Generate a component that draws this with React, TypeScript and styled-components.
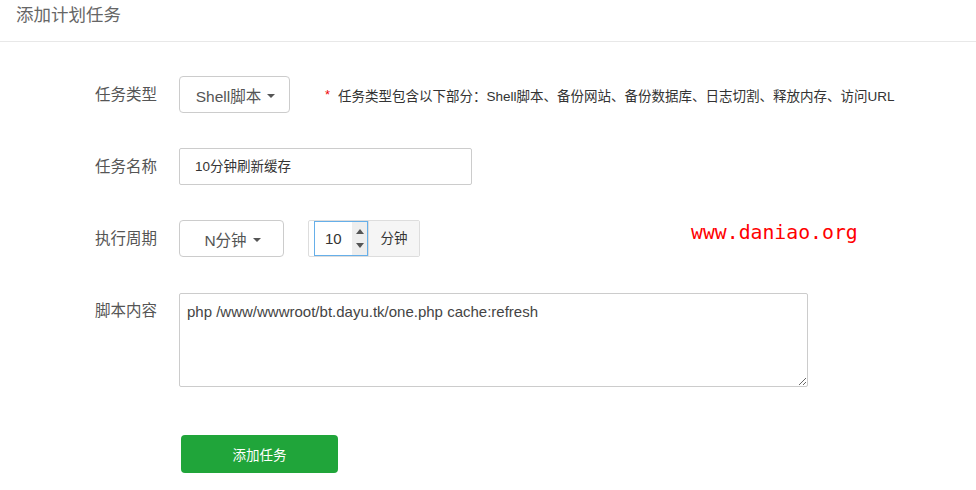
import styled, { createGlobalStyle } from "styled-components";

const GlobalStyle = createGlobalStyle`
  body {
    margin: 0;
    background: #fff;
    font-family: "Liberation Sans", "Noto Sans CJK SC", sans-serif;
    color: #555;
  }
  * { box-sizing: border-box; }
`;

const Page = styled.div`
  position: relative;
  width: 976px;
  height: 490px;
  overflow: hidden;
`;

const Header = styled.div`
  height: 42px;
  padding: 0 16px;
  border-bottom: 1px solid #e8e8e8;
  font-size: 17.5px;
  line-height: 31px;
  color: #666;
`;

const Form = styled.div`
  display: grid;
  grid-template-columns: 157px 1fr;
  column-gap: 22px;
  row-gap: 35px;
  padding-top: 34px;
`;

const Label = styled.div`
  text-align: right;
  font-size: 15.5px;
  line-height: 37px;
  color: #555;
`;

const Line = styled.div`
  display: flex;
  align-items: center;
`;

const Dropdown = styled.div<{ $w: number }>`
  width: ${(p) => p.$w}px;
  height: 37px;
  border: 1px solid #ccc;
  border-radius: 4px;
  display: flex;
  align-items: center;
  justify-content: center;
  gap: 6px;
  font-size: 15.5px;
  color: #555;
  padding-left: 2px;
`;

const Caret = styled.span`
  width: 0;
  height: 0;
  border-left: 4px solid transparent;
  border-right: 4px solid transparent;
  border-top: 4px solid #555;
  margin-top: 2px;
`;

const Note = styled.div`
  margin-left: 35px;
  font-size: 13.5px;
  color: #333;
  display: flex;
  align-items: center;
  gap: 8px;
`;

const Star = styled.span`
  color: #ef0808;
  font-size: 13px;
`;

const TextInput = styled.div`
  width: 293px;
  height: 37px;
  border: 1px solid #ccc;
  border-radius: 2px;
  padding-left: 15px;
  font-size: 13.5px;
  line-height: 35px;
  color: #333;
`;

const Group = styled.div`
  margin-left: 24px;
  height: 37px;
  display: flex;
  border: 1px solid #ddd;
  border-radius: 2px;
  padding-left: 5px;
`;

const NumBox = styled.div`
  width: 54px;
  height: 35px;
  border: 1px solid #66afe9;
  display: flex;
  align-items: stretch;
`;

const NumText = styled.div`
  flex: 1;
  padding-left: 10px;
  font-size: 15px;
  line-height: 33px;
  color: #333;
`;

const Spinner = styled.div`
  width: 15px;
  background: #eee;
  display: flex;
  flex-direction: column;
  justify-content: space-between;
  align-items: center;
  padding: 7px 0;
`;

const Arrow = styled.span<{ $up?: boolean }>`
  width: 0;
  height: 0;
  border-left: 4px solid transparent;
  border-right: 4px solid transparent;
  ${(p) =>
    p.$up ? "border-bottom: 5px solid #555;" : "border-top: 5px solid #555;"}
`;

const Addon = styled.div`
  width: 51px;
  background: #f5f5f5;
  border-left: 1px solid #ddd;
  font-size: 13.5px;
  line-height: 35px;
  text-align: center;
  color: #333;
`;

const Script = styled.textarea`
  width: 629px;
  height: 94px;
  margin-top: 1px;
  border: 1px solid #ccc;
  border-radius: 2px;
  padding: 8px 7px;
  font-family: "Liberation Sans", "Noto Sans CJK SC", sans-serif;
  font-size: 15px;
  line-height: 20px;
  color: #444;
  resize: both;
  outline: none;
`;

const Submit = styled.button`
  grid-column: 2;
  margin-top: 13px;
  margin-left: 2px;
  width: 157px;
  height: 38px;
  border: none;
  border-radius: 4px;
  background: #20a53a;
  color: #fff;
  font-family: "Liberation Sans", "Noto Sans CJK SC", sans-serif;
  font-size: 13.5px;
`;

const Watermark = styled.div`
  position: absolute;
  left: 691px;
  top: 221px;
  font-family: "DejaVu Sans Mono", "Liberation Mono", monospace;
  font-size: 19.8px;
  color: #ff0000;
`;

export default function App() {
  return (
    <Page>
      <GlobalStyle />
      <Header>添加计划任务</Header>
      <Form>
        <Label>任务类型</Label>
        <Line>
          <Dropdown $w={111}>
            Shell脚本 <Caret />
          </Dropdown>
          <Note>
            <Star>*</Star>
            任务类型包含以下部分：Shell脚本、备份网站、备份数据库、日志切割、释放内存、访问URL
          </Note>
        </Line>

        <Label>任务名称</Label>
        <Line>
          <TextInput>10分钟刷新缓存</TextInput>
        </Line>

        <Label>执行周期</Label>
        <Line>
          <Dropdown $w={105}>
            N分钟 <Caret />
          </Dropdown>
          <Group>
            <NumBox>
              <NumText>10</NumText>
              <Spinner>
                <Arrow $up />
                <Arrow />
              </Spinner>
            </NumBox>
            <Addon>分钟</Addon>
          </Group>
        </Line>

        <Label>脚本内容</Label>
        <Line>
          <Script
            readOnly
            defaultValue="php /www/wwwroot/bt.dayu.tk/one.php cache:refresh"
          />
        </Line>

        <Submit>添加任务</Submit>
      </Form>
      <Watermark>www.daniao.org</Watermark>
    </Page>
  );
}
